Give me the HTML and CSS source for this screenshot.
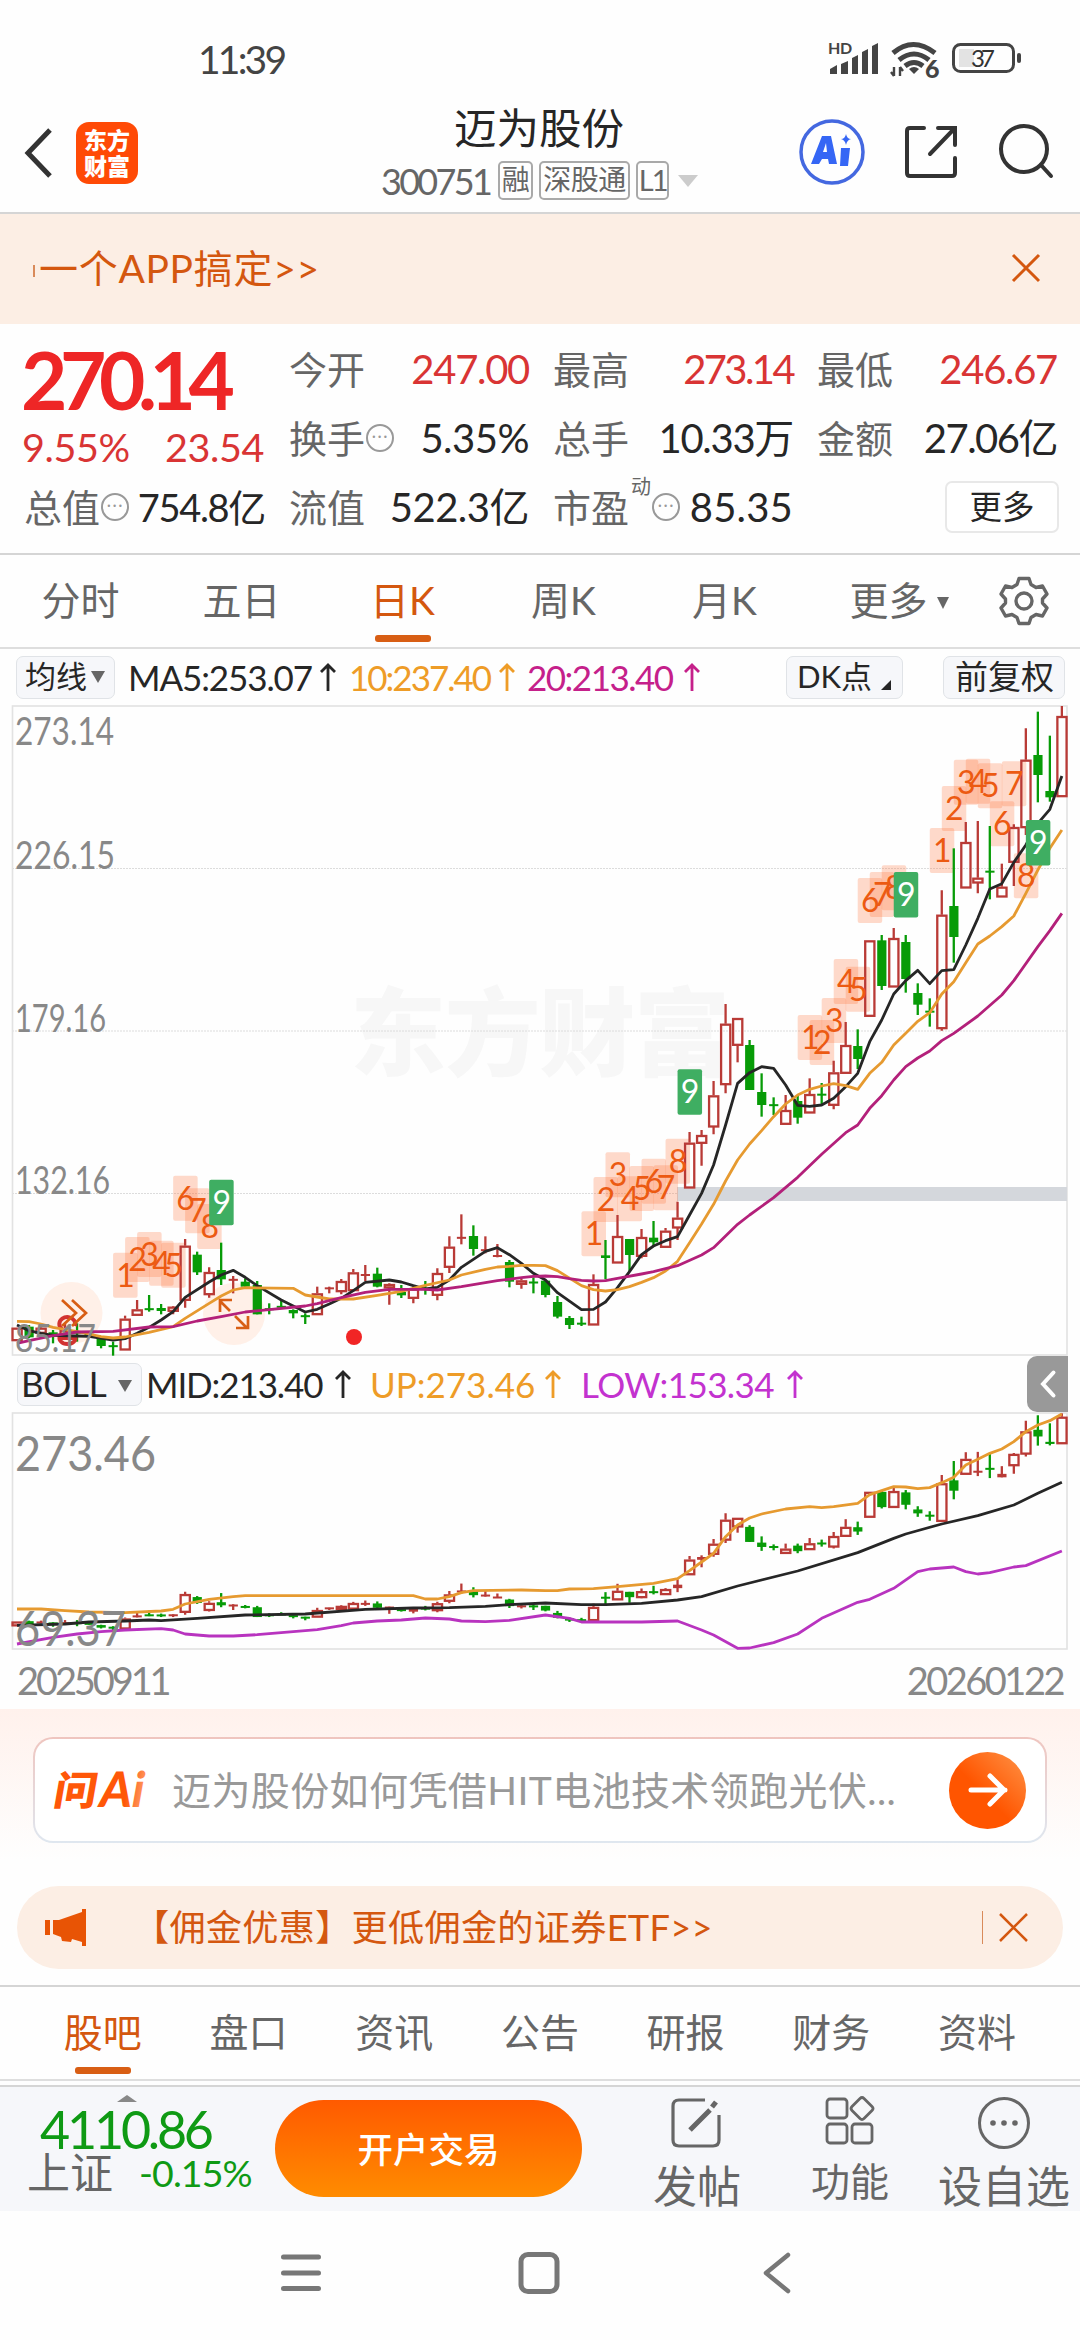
FILE: index.html
```html
<!DOCTYPE html>
<html lang="zh-CN">
<head>
<meta charset="utf-8">
<title>迈为股份 300751</title>
<link rel="stylesheet" href="styles.css">
</head>
<body>
<div class="screen">
  <div class="status">
    <span class="clock">11:39</span>
    <svg class="status-icons" width="200" height="44" viewBox="824 38 200 44">
      <g fill="#444">
        <text x="828" y="55" class="hd">HD</text>
        <path d="M830 70l7-4v9h-7zM841 65l7-3v13h-7zM852 59l6-3v19h-6zM862 53l6-3v25h-6zM872 47l6-3v31h-6z"/>
        <path d="M914 75l-5-5q5-4 10 0z"/>
        <path d="M894 68v9M891 73l3 4M900 77v-9M903 72l-3-4" fill="none" stroke="#444" stroke-width="2.4"/>
        <text x="925" y="79" class="six">6</text>
      </g>
      <g fill="none" stroke="#444" stroke-width="5">
        <path d="M893 54q20-17 42 0M899 61q15-12 30 0M905 67q9-7 18 0"/>
      </g>
      <rect x="953.500" y="45.500" width="60" height="27" rx="7" fill="none" stroke="#444" stroke-width="3"/>
      <path d="M959 50h15v18h-15q0 0 0-3z" fill="#e3e3e3"/>
      <rect x="1017" y="54" width="4" height="10" rx="2" fill="#444"/>
      <text x="971" y="67.500" class="batt" textLength="24">37</text>
    </svg>
  </div>

  <header class="header">
    <svg class="back" width="30" height="52" viewBox="0 0 30 52"><path d="M26 3L4 26l22 23" fill="none" stroke="#333" stroke-width="5"/></svg>
    <div class="brand"><span>东方</span><span>财富</span></div>
    <div class="title">
      <h1>迈为股份</h1>
      <div class="sub"><span class="code">300751</span><i class="tag">融</i><i class="tag tag-wide">深股通</i><i class="tag tag-l">L1</i><b class="drop"></b></div>
    </div>
    <svg class="tools" width="262" height="70" viewBox="796 116 262 70">
      <circle cx="831" cy="152" r="31" fill="none" stroke="#4468e0" stroke-width="3.500"/>
      <path fill="#3566f5" fill-rule="evenodd" d="M821 136h9l6 28h-8l-1-5h-6l-3 5h-8zM825 143l-3 9h4zM840 148h9l-2 18h-8zM845 134q1 5 5 5q-4 1-5 6q-1-5-5-6q4 0 5-5z"/>
      <g fill="none" stroke="#333" stroke-width="4" stroke-linecap="round">
        <path d="M923 128h-14q-3 0-3 3v42q0 3 3 3h42q3 0 3-3v-15M937 128h17v17M953 129l-24 25"/>
        <circle cx="1023" cy="149" r="23"/><path d="M1040 165l10 11"/>
      </g>
    </svg>
  </header>

  <div class="banner"><span class="stub"></span><span class="banner-text">一个APP搞定&gt;&gt;</span>
    <svg width="30" height="30" viewBox="0 0 30 30"><path d="M2 2l26 26M28 2L2 28" stroke="#d4570f" stroke-width="3"/></svg>
  </div>

  <section class="quote">
    <div class="price-box">
      <div class="price">270.14</div>
      <div class="change"><span>9.55%</span><span>23.54</span></div>
    </div>
    <div class="cell"><label>今开</label><span class="v up">247.00</span></div>
    <div class="cell"><label>最高</label><span class="v up snug">273.14</span></div>
    <div class="cell"><label>最低</label><span class="v up">246.67</span></div>
    <div class="cell"><label>换手</label><i class="dots">•••</i><span class="v wide">5.35%</span></div>
    <div class="cell"><label>总手</label><span class="v">10.33万</span></div>
    <div class="cell"><label>金额</label><span class="v tight">27.06亿</span></div>
    <div class="cell"><label>总值</label><i class="dots">•••</i><span class="v small">754.8亿</span></div>
    <div class="cell"><label>流值</label><span class="v wide">522.3亿</span></div>
    <div class="cell"><label>市盈</label><sup>动</sup><i class="dots">•••</i><span class="v wider">85.35</span></div>
    <div class="cell end"><button class="more">更多</button></div>
  </section>

  <nav class="periods">
    <span>分时</span><span>五日</span><span class="on">日K</span><span>周K</span><span>月K</span><span class="pm">更多<b></b></span>
    <svg width="50" height="50" viewBox="-25 -25 50 50" fill="none" stroke="#666" stroke-width="3.400" stroke-linejoin="round"><path d="M-5-22.500h10l2 6 5 3 6.500-1.500 4.500 8-4.500 5v4l4.500 5-4.500 8-6.500-1.500-5 3-2 6h-10l-2-6-5-3-6.500 1.500-4.500-8 4.500-5v-4l-4.500-5 4.500-8 6.500 1.500 5-3z"/><circle r="8"/></svg>
  </nav>

  <div class="ind">
    <span class="chip">均线<b></b></span>
    <span class="m1">MA5:253.07</span><svg class="arr a1" width="16" height="28" viewBox="0 0 16 28"><path d="M8 28V2M1 9l7-7 7 7"/></svg>
    <span class="m2">10:237.40</span><svg class="arr a2" width="16" height="28" viewBox="0 0 16 28"><path d="M8 28V2M1 9l7-7 7 7"/></svg>
    <span class="m3">20:213.40</span><svg class="arr a3" width="16" height="28" viewBox="0 0 16 28"><path d="M8 28V2M1 9l7-7 7 7"/></svg>
    <span class="chip dk">DK点<em></em></span><span class="chip fq">前复权</span>
  </div>
  <svg id="kline" class="chart" width="1080" height="651" viewBox="0 705 1080 651"></svg>

  <div class="ind boll">
    <span class="chip bl">BOLL<b></b></span>
    <span class="b1">MID:213.40</span><svg class="arr a1" width="16" height="30" viewBox="0 0 16 28"><path d="M8 28V2M1 9l7-7 7 7"/></svg>
    <span class="b2">UP:273.46</span><svg class="arr a2" width="16" height="30" viewBox="0 0 16 28"><path d="M8 28V2M1 9l7-7 7 7"/></svg>
    <span class="b3">LOW:153.34</span><svg class="arr a4" width="16" height="30" viewBox="0 0 16 28"><path d="M8 28V2M1 9l7-7 7 7"/></svg>
    <span class="handle"><svg width="16" height="28" viewBox="0 0 16 28"><path d="M13.500 2.500L3 14l10.500 11.500" fill="none" stroke="#fff" stroke-width="4" stroke-linecap="round"/></svg></span>
  </div>
  <svg id="boll" class="chart" width="1080" height="239" viewBox="0 1412 1080 239"></svg>
  <div class="dates"><span>20250911</span><span>20260122</span></div>

  <section class="ask">
    <div class="ask-card">
      <svg class="ask-logo" width="94" height="50" viewBox="0 0 94 50">
        <defs><linearGradient id="lg" x1="0" x2="1"><stop offset=".6" stop-color="#ff5708"/><stop offset="1" stop-color="#ff9a63"/></linearGradient></defs>
        <g transform="skewX(-10)" fill="#ff5708"><text x="7" y="40" class="wen" textLength="43" lengthAdjust="spacingAndGlyphs">问</text><text x="53" y="42" class="ai" fill="url(#lg)" textLength="44" lengthAdjust="spacingAndGlyphs">Ai</text></g>
      </svg>
      <span class="ask-text">迈为股份如何凭借HIT电池技术领跑光伏...</span>
      <span class="go"><svg width="40" height="36" viewBox="0 0 40 36"><path d="M3 18h34M22 4l14 14-14 14" fill="none" stroke="#fff" stroke-width="5" stroke-linecap="round" stroke-linejoin="round"/></svg></span>
    </div>
  </section>

  <div class="promo">
    <svg width="42" height="37" viewBox="0 0 42 37"><path d="M0 11h5v15H0zM8 11h6L37 3V0h4v37h-4v-4l-10-3-1 3-9-1-1-4-8-3z" fill="#e85405"/></svg>
    <span class="promo-text">【佣金优惠】更低佣金的证券ETF&gt;&gt;</span>
    <i class="bar"></i>
    <svg width="31" height="31" viewBox="0 0 31 31"><path d="M2 2l27 27M29 2L2 29" stroke="#d4570f" stroke-width="2.500"/></svg>
  </div>

  <nav class="tabs">
    <span class="on">股吧</span><span>盘口</span><span>资讯</span><span>公告</span><span>研报</span><span>财务</span><span>资料</span>
  </nav>

  <footer class="bottom">
    <div class="index">
      <b class="tri"></b>
      <div class="pts">4110.86</div>
      <div class="sh"><span>上证</span><em>-0.15%</em></div>
    </div>
    <button class="open">开户交易</button>
    <div class="act a-post">
      <svg width="54" height="54" viewBox="0 0 54 54" fill="none" stroke="#666" stroke-width="3.200"><path d="M35 4H9q-6 0-6 6v34q0 6 6 6h34q6 0 6-6V19"/><path d="M46 6l-4 5M40 14L20 34" stroke-width="5"/></svg>
      <span>发帖</span>
    </div>
    <div class="act a-fn">
      <svg width="50" height="50" viewBox="0 0 50 50" fill="none" stroke="#666" stroke-width="2.800"><rect x="2" y="3" width="20" height="19" rx="3"/><rect x="2" y="28" width="20" height="19" rx="3"/><rect x="27" y="28" width="20" height="19" rx="3"/><path d="M35 2.500q2-2 4 0l8 8q2 2 0 4l-8 8q-2 2-4 0l-8-8q-2-2 0-4z"/></svg>
      <span>功能</span>
    </div>
    <div class="act a-add">
      <svg width="54" height="54" viewBox="-27 -27 54 54"><circle r="24.500" fill="none" stroke="#666" stroke-width="3"/><g fill="#666"><circle cx="-11" r="2.800"/><circle r="2.800"/><circle cx="11" r="2.800"/></g></svg>
      <span>设自选</span>
    </div>
  </footer>

  <div class="sysnav">
    <svg width="42" height="44" viewBox="0 0 42 44"><path d="M3.500 6h35M3.500 22h35M3.500 37.500h35" stroke="#777" stroke-width="5" stroke-linecap="round"/></svg>
    <svg width="42" height="44" viewBox="0 0 42 44"><rect x="3" y="3.500" width="36" height="37" rx="7" fill="none" stroke="#777" stroke-width="5"/></svg>
    <svg width="42" height="44" viewBox="0 0 42 44"><path d="M32 4L10 22l22 18" fill="none" stroke="#777" stroke-width="4.500" stroke-linecap="round" stroke-linejoin="round"/></svg>
  </div>
</div>
<script src="chart.js"></script>
</body>
</html>
```

FILE: styles.css
```css
* { box-sizing: border-box; }
body {
  margin: 0;
  background: #fff;
  color: #262626;
  font-family: Lato, "Noto Sans CJK SC", sans-serif;
  font-size: 38px;
}
.screen { width: 1080px; height: 2340px; overflow: hidden; display: flex; flex-direction: column; background: #fefefe; }
.screen > * { flex: none; }
i, em { font-style: normal; }
button { font: inherit; padding: 0; }
svg { overflow: visible; }

.status { height: 104px; padding: 14px 56px 0 198px; display: flex; justify-content: space-between; align-items: center; }
.clock { font-size: 39px; color: #444; letter-spacing: -2.8px; margin-top: -1px; }
.hd { font: bold 16px Lato, sans-serif; letter-spacing: -.4px; }
.six { font: 900 25px Lato, sans-serif; }
.batt { font: 24px Lato, sans-serif; fill: #333; }

.header { height: 110px; border-bottom: 2px solid #d5d5d5; display: flex; align-items: center; padding: 0 21px 14px 24px; }
.back { margin-top: 3px; }
.brand { width: 62px; height: 62px; margin: 4px 0 0 22px; border-radius: 13px; background: #ff4a06; color: #fff; font-weight: 900; font-size: 23px; line-height: 26px; display: flex; flex-direction: column; align-items: center; justify-content: center; }
.title { width: 446px; margin-left: 179px; }
.title h1 { margin: 2px 0 0; text-align: center; font-size: 42.500px; line-height: 50px; font-weight: 400; padding-right: 2px; }
.sub { display: flex; align-items: center; height: 42px; margin-top: 7px; margin-left: 64px; }
.code { font-size: 36px; color: #666; letter-spacing: -2.7px; margin-right: 8px; }
.tag { height: 39px; width: 35px; border: 2px solid #a9a9a9; border-radius: 5px; color: #666; font-size: 28px; line-height: 33px; text-align: center; margin-right: 6px; letter-spacing: -.5px; flex: none; }
.tag-wide { width: 91px; }
.tag-l { width: 33px; margin-right: 9px; font-size: 29px; letter-spacing: -2px; }
.drop { border: 10px solid transparent; border-top: 12px solid #ccc; border-bottom: 0; }
.tools { margin-left: 34px; margin-top: 0; }

.banner { height: 110px; background: #fceee4; display: flex; align-items: center; padding: 0 39px 2px 33px; color: #d4570f; }
.stub { width: 2px; height: 12px; background: #d98a5a; margin: 6px 4px 0 0; }
.banner-text { flex: 1; font-size: 39px; letter-spacing: .7px; margin-top: -4px; }

.quote { height: 229px; padding: 10px 24px 0; display: grid; grid-template-columns: 240px 239px 239px 239px; column-gap: 25px; grid-template-rows: 69px 69px 69px; }
.price-box { grid-row: span 2; color: #ee2626; display: flex; flex-direction: column; }
.price { font-size: 80px; font-weight: 700; line-height: 90px; letter-spacing: -7.4px; margin-left: -3px; }
.change { display: flex; justify-content: space-between; font-size: 39.500px; line-height: 46px; letter-spacing: -.4px; margin-left: -2px; color: #d93434; }
.cell { display: flex; align-items: center; white-space: nowrap; line-height: 60px; }
.cell label { color: #666; font-size: 38px; }
.cell .v { margin-left: auto; font-size: 40px; letter-spacing: -1.3px; margin-right: -1px; }
.cell .tight { letter-spacing: -1.500px; }
.cell .snug { letter-spacing: -2.600px; }
.cell .wide { letter-spacing: -.5px; }
.cell .wider { letter-spacing: .2px; }
.cell .small { font-size: 38px; letter-spacing: -1.3px; }
.cell .up { color: #d93434; }
.dots { width: 28px; height: 28px; border: 2.500px solid #999; border-radius: 50%; font: 8px/23px "DejaVu Sans", sans-serif; color: #999; text-align: center; letter-spacing: 1px; margin-left: 1px; flex: none; }
.cell sup { font-size: 20px; line-height: 20px; color: #666; align-self: flex-start; margin: 4px 0 0 2px; }
.end { justify-content: flex-end; }
.more { width: 114px; height: 52px; border: 2px solid #e8e8e8; border-radius: 7px; background: #fff; color: #262626; font-size: 32.500px; line-height: 46px; margin-right: -3px; }

.periods { height: 96px; border-top: 2px solid #d5d5d5; border-bottom: 2px solid #dedede; display: flex; align-items: center; padding: 0 31px 0 0; color: #666; font-size: 39px; }
.periods span { width: 161px; text-align: center; line-height: 91px; height: 92px; position: relative; }
.periods .on, .tabs .on { color: #d4570f; }
.periods .on::after, .tabs .on::after { content: ""; position: absolute; left: 50%; bottom: 5px; width: 56px; margin-left: -28px; height: 7px; border-radius: 3px; background: #d85e14; }
.periods .pm { width: 178px; padding-left: 10px; }
.pm b { display: inline-block; border: 6.500px solid transparent; border-top: 12px solid #666; border-bottom: 0; margin-left: 9px; vertical-align: 6px; }
.periods svg { margin-left: 16px; }

.ind { height: 56px; display: flex; align-items: center; font-size: 35px; white-space: nowrap; padding-left: 16px; position: relative; }
.chip { height: 43px; border: 1.500px solid #e0e3e7; border-radius: 7px; background: #f6f7fa; font-size: 31px; line-height: 39px; width: 99px; padding-left: 8px; flex: none; }
.chip b { display: inline-block; border: 7px solid transparent; border-top: 12px solid #666; border-bottom: 0; margin-left: 4px; vertical-align: 5px; }
.m1 { margin-left: 13px; width: 192px; letter-spacing: -1.1px; }
.m2 { width: 150px; margin-left: 13px; color: #ee9c27; letter-spacing: -2px; }
.m3 { width: 157px; margin-left: 12px; color: #c5208a; letter-spacing: -1.500px; }
.arr { fill: none; stroke-width: 2.800; flex: none; }
.a1 { stroke: #262626; } .a2 { stroke: #ee9c27; } .a3 { stroke: #c5208a; } .a4 { stroke: #c332cf; }
.dk { width: 117px; margin-left: 86px; padding-left: 10px; }
.dk em { display: inline-block; border-left: 10px solid transparent; border-bottom: 10px solid #262626; margin-left: 9px; vertical-align: -2px; }
.fq { width: 122px; margin-left: 40px; padding-left: 11px; font-size: 33px; }
.chart { display: block; }
.boll { height: 56px; padding-left: 17px; }
.bl { width: 125px; padding-left: 3px; font-size: 35px; letter-spacing: -.3px; }
.bl b { margin-left: 12px; }
.b1 { width: 189px; margin-left: 4px; letter-spacing: -1.1px; }
.b2 { width: 175px; margin-left: 19px; color: #ee9c27; }
.b3 { width: 206px; margin-left: 20px; color: #c332cf; letter-spacing: -.6px; }
.handle { width: 41px; height: 56px; background: #999; border-radius: 10px 0 0 10px; margin-left: auto; margin-right: 12px; display: flex; align-items: center; justify-content: center; }
.axis { font: 38px Lato, sans-serif; fill: #888; }
.axis-lg { font: 49px Lato, sans-serif; fill: #888; }
.mark { font: 32px Lato, sans-serif; text-anchor: middle; }
.watermark { font: 900 96px "Noto Sans CJK SC", sans-serif; fill: #f7f7f7; }
.dates { height: 58px; display: flex; justify-content: space-between; align-items: center; padding: 0 17px 0; color: #888; font-size: 38px; letter-spacing: -3.1px; }
.dates span:last-child { letter-spacing: -2.500px; }

.ask { height: 177px; padding: 28px 33px 0; background: linear-gradient(#fff1ec, #fefefe 85%); }
.ask-card { height: 106px; border: 2px solid transparent; border-radius: 20px; background: linear-gradient(#fff, #fff) padding-box, linear-gradient(#efc5bf, #dfe7f0) border-box; display: flex; align-items: center; padding: 0 19px 0 17px; }
.ask-text { margin: -5px 0 0 26px; flex: 1; color: #999; font-size: 39px; white-space: nowrap; letter-spacing: .4px; }
.wen { font: 900 40px "Noto Sans CJK SC", sans-serif; }
.ai { font: 900 49px Lato, sans-serif; }
.go { width: 77px; height: 77px; border-radius: 50%; background: linear-gradient(45deg, #ff5500 45%, #ff9448); display: flex; align-items: center; justify-content: center; flex: none; }

.promo { height: 83px; margin: 0 17px; border-radius: 42px; background: #fceee4; display: flex; align-items: center; padding: 0 34px 0 28px; color: #d4570f; }
.promo-text { flex: 1; margin: -5px 0 0 46px; font-size: 36.200px; letter-spacing: .25px; white-space: nowrap; }
.bar { width: 1.500px; height: 33px; background: #d98a5a; margin-right: 15px; }

.tabs { height: 96px; margin-top: 16px; border-top: 2px solid #d5d5d5; border-bottom: 2px solid #dedede; display: flex; padding: 0 30px; font-size: 39px; color: #666; }
.tabs span { width: 145.700px; flex: none; text-align: center; position: relative; line-height: 90px; height: 92px; }
.bottom { height: 126px; margin-top: 4px; border-top: 2px solid #d5d5d5; background: #f6f7fa; display: flex; position: relative; }
.index { width: 275px; padding: 8px 0 0 27px; color: #0f9a14; }
.tri { display: block; width: 0; border: 10px solid transparent; border-bottom: 7px solid #888; border-top: 0; margin-left: 90px; }
.pts { font-size: 52px; line-height: 56px; letter-spacing: -3.2px; margin: -1px 0 0 13px; }
.sh { display: flex; line-height: 40px; height: 40px; align-items: center; margin-top: -4px; }
.sh span { font-size: 43px; color: #666; }
.sh em { font-size: 37.500px; letter-spacing: -.9px; margin-left: 26px; }
.open { width: 307px; height: 97px; margin-top: 13px; border: 0; border-radius: 49px; background: linear-gradient(#ff5a00, #ff8c00); color: #fff; font-size: 35.500px; font-weight: 500; flex: none; padding-bottom: 3px; }
.act { display: flex; flex-direction: column; align-items: center; color: #666; font-size: 44px; line-height: 60px; white-space: nowrap; flex: none; padding-top: 9px; }
.act span { margin-top: 6px; }
.a-post { width: 112px; margin-left: 59px; }
.a-fn { width: 112px; margin-left: 41px; font-size: 39px; }
.a-add { width: 140px; margin-left: 28px; }
.a-fn span { margin-top: 5px; }
.sysnav { height: 129px; display: flex; align-items: center; gap: 196px; padding: 0 0 5px 280px; }
```

FILE: chart.js
```js
// Offsets are thirds of a pixel from the reference row at y = 1100.
const NS = "http://www.w3.org/2000/svg";
const X = i => 17 + i * 12.010;
const Y = v => 1100 + v / 3;
const price = v => 273.14 - (Y(v) - 706) / 3.4527;
const YB = v => 1413 + (273.46 - price(v)) * 1.156;
const Y2 = v => 1400 + v / 3;
const RED = "#b93a36", GREEN = "#079b07";

function add(svg, tag, attrs, text) {
  const el = document.createElementNS(NS, tag);
  for (const k in attrs) el.setAttribute(k, attrs[k]);
  if (text) el.textContent = text;
  svg.appendChild(el);
  return el;
}

// colour, high, body top, body bottom, low
const candles = `r 683 683 722 722|g 675 680 712 714|r 675 683 700 700|g 690 697 703 730|r 670 690 706 706|g 670 696 700 725|g 695 702 706 712|g 712 715 738 745|g 725 736 741 767|r 647 656 750 750|r 600 628 646 646|g 585 626 629 635|g 612 624 633 643|r 618 620 634 643|r 417 437 601 623|g 455 464 517 525|r 502 516 584 593|g 428 510 538 555|r 528 538 541 580|g 535 545 560 565|g 543 555 643 643|g 610 626 629 643|g 600 619 622 625|g 628 630 640 655|g 640 646 651 672|r 560 580 644 644|r 560 562 568 580|r 537 543 575 583|r 507 517 572 572|r 495 523 527 543|g 503 521 560 562|r 550 552 564 614|g 555 576 586 594|r 560 566 595 610|g 543 566 569 584|r 505 519 586 601|r 409 440 502 519|r 343 412 415 433|g 376 408 447 467|r 409 449 452 460|r 432 465 471 472|g 480 486 545 562|r 537 541 553 566|g 532 546 549 580|g 542 542 585 592|g 588 606 650 655|g 648 654 675 687|g 650 668 674 678|r 523 552 675 675|g 420 466 474 538|r 345 408 489 489|g 417 417 465 515|r 387 411 469 475|g 363 413 427 440|r 384 392 442 442|r 305 353 384 420|r 96 128 264 264|r 90 105 130 197|r -57 -14 81 103|r -288 -229 -46 -20|r -246 -246 -164 -113|g -180 -165 -30 -30|g -80 -24 15 50|g -8 14 17 45|r -15 30 73 73|g -15 3 53 71|r -65 -18 39 39|g -51 -18 -14 12|r -118 -83 16 28|r -234 -165 -80 -80|g -212 -162 -123 -93|r -479 -479 -251 -251|g -495 -479 -342 -330|r -516 -486 -339 -339|g -495 -474 -363 -322|g -350 -321 -286 -255|g -305 -267 -263 -220|r -629 -556 -214 -208|g -755 -582 -489 -412|r -834 -774 -636 -636|r -837 -667 -651 -620|g -822 -687 -683 -602|r -709 -640 -609 -609|r -827 -819 -713 -642|r -1115 -1021 -817 -795|g -1165 -1035 -975 -893|g -1093 -927 -908 -895|r -1182 -1152 -910 -910`.split("|").map(s => s.split(" "));

const ma5 = "0:675 1:692 2:700 3:706 5:708 6:709 8:720 9:716 10:700 11:682 12:660 13:635 14:592 16:546 17:525 18:511 19:532 20:557 22:600 24:636 25:628 26:612 27:595 28:572 29:547 31:540 32:546 33:557 34:567 35:562 36:540 37:502 39:454 40:443 41:464 42:490 43:520 44:540 45:578 47:629 48:628 49:606 50:563 51:515 52:464 53:438 54:422 55:410 56:345 57:280 58:195 59:75 60:-50 61:-82 62:-100 63:-95 64:-45 65:16 66:19 67:15 68:-5 69:-40 70:-80 71:-175 72:-240 73:-318 74:-358 75:-389 76:-349 77:-388 78:-391 79:-465 80:-545 81:-633 82:-649 83:-713 84:-765 85:-830 86:-872 87:-972";
const ma10 = "0:664 1:665 2:672 3:682 5:695 6:702 7:710 8:714 9:711 11:697 13:680 14:655 16:610 17:588 18:570 19:563 23:565 24:585 26:597 28:597 30:586 32:574 34:556 36:540 37:525 39:508 40:501 41:499 42:496 43:496 44:497 45:512 47:557 48:569 49:573 50:569 51:560 52:547 53:533 54:513 55:484 56:428 57:372 58:313 59:243 60:180 61:132 62:92 63:50 64:12 65:-15 66:-32 67:-42 68:-49 69:-43 70:-32 71:-80 72:-113 73:-165 74:-200 75:-236 76:-262 77:-318 78:-355 79:-412 80:-468 81:-492 82:-520 83:-552 84:-620 85:-690 86:-755 87:-810";
const ma20 = "0:730 1:722 3:707 5:696 8:694 11:681 13:680 15:663 17:650 19:636 21:629 24:618 25:611 27:593 29:577 31:568 34:568 35:570 37:560 39:548 40:542 42:533 43:529 44:528 45:530 46:536 47:541 48:543 49:542 50:535 52:522 53:515 55:497 57:465 58:443 60:373 61:345 63:293 65:232 67:163 69:98 70:75 71:25 72:-13 73:-60 74:-100 75:-126 76:-147 77:-178 78:-200 80:-252 82:-315 83:-358 85:-460 86:-508 87:-560";
const up = "0:627 2:627 4:632 6:636 9:638 12:633 13:628 14:612 16:598 18:590 19:587 33:587 34:597 35:597 36:590 37:578 38:572 42:570 44:572 45:572 46:567 48:566 50:560 53:550 55:536 56:512 57:486 58:460 59:410 60:375 61:354 62:342 64:327 66:320 67:323 68:320 70:310 71:284 73:260 74:261 75:266 76:263 77:248 78:232 79:195 80:178 81:160 82:147 83:125 84:95 85:75 86:62 87:42";
const mid = "0:676 4:672 6:666 9:663 11:660 12:662 15:655 19:645 24:642 29:628 33:624 36:623 39:619 41:614 44:609 47:614 49:614 52:610 55:600 57:590 60:558 65:513 70:458 73:415 74:402 77:372 80:347 83:315 85:280 87:247";
const low = "0:732 3:712 5:702 7:695 9:690 12:686 13:690 14:702 16:708 18:708 20:704 25:689 27:677 28:669 30:663 32:660 34:654 36:657 37:663 39:665 41:661 44:645 46:655 47:666 52:666 55:663 57:690 58:705 60:745 61:744 63:728 65:702 67:655 70:607 71:598 73:565 75:515 76:507 78:501 79:515 80:522 81:518 83:501 84:497 87:453";

// index : count : top of the badge
const marks = "9:1:458 10:2:411 11:3:396 12:4:422 13:5:428 14:6:227 15:7:265 16:8:312 17:9:239 48:1:334 49:2:231 50:3:157 51:4:229 52:5:198 53:6:176 54:7:196 55:8:116 56:9:-92 66:1:-255 67:2:-240 68:3:-306 69:4:-423 70:5:-400 71:6:-666 72:7:-684 73:8:-704 74:9:-684 77:1:-816 78:2:-942 79:3:-1021 80:4:-1024 81:5:-1010 82:6:-896 83:7:-1016 84:8:-740 85:9:-840".split(" ").map(s => s.split(":").map(Number));

function frame(svg, top, bottom) {
  add(svg, "rect", { x: 12.500, y: top, width: 1054.500, height: bottom - top, fill: "none", stroke: "#e2e2e2", "stroke-width": 1.600 });
}

function drawCandles(svg, y) {
  candles.forEach(([c, ...v], i) => {
    const [h, t, b, l] = v.map(Number).map(y);
    const x = X(i), col = c === "r" ? RED : GREEN;
    const mid = (t + b) / 2, hollow = c === "r" && b - t > 3.500;
    if (hollow) {
      add(svg, "path", { d: `M${x} ${h}V${t}M${x} ${b}V${l}`, stroke: col, "stroke-width": 2.300 });
      add(svg, "rect", { x: x - 4.500, y: t + 1, width: 9.200, height: b - t - 1.500, fill: "none", stroke: col, "stroke-width": 2.300 });
    } else {
      const hh = Math.max(b - t, 2);
      add(svg, "path", { d: `M${x} ${h}V${l}`, stroke: col, "stroke-width": 2.300 });
      add(svg, "rect", { x: x - 4.500, y: mid - hh / 2, width: 9.200, height: hh, fill: col });
    }
  });
}

function line(svg, data, y, stroke) {
  const points = data.split(" ").map(p => p.split(":").map(Number)).map(([i, v]) => `${X(i)},${y(v)}`).join(" ");
  add(svg, "polyline", { points, fill: "none", stroke, "stroke-width": 2.800, "stroke-linejoin": "round" });
}

function label(svg, x, y, w, text, cls) {
  add(svg, "text", { x, y, class: cls || "axis", textLength: w, lengthAdjust: "spacingAndGlyphs" }, text);
}

const k = document.getElementById("kline");
add(k, "text", { x: 350, y: 1068, class: "watermark", textLength: 380 }, "东方财富");
[868.500, 1031, 1193.500].forEach(y => add(k, "path", { d: `M12 ${y}H1067`, stroke: "#dcdcdc", "stroke-width": 1, "stroke-dasharray": "2 1" }));
frame(k, 706, 1355);
add(k, "rect", { x: 677, y: 1187, width: 390, height: 14, fill: "#d4d7dc" });
marks.filter(m => m[1] < 9).forEach(([i, , t]) => add(k, "rect", { x: X(i) - 12, y: Y(t), width: 24.500, height: 45, rx: 2, fill: "#ff7038", "fill-opacity": .26 }));
add(k, "circle", { cx: 71.500, cy: 1313, r: 31, fill: "#fff0e8" });
add(k, "circle", { cx: 234, cy: 1314, r: 31, fill: "#fff0e8" });
drawCandles(k, Y);
add(k, "path", { d: "M75 1326a8 7 0 1 0-7 5M60 1336a8 6 0 1 0 15 0M58 1338h19", fill: "none", stroke: "#d23230", "stroke-width": 4 });
line(k, ma5, Y, "#262626");
line(k, ma10, Y, "#e69a30");
line(k, ma20, Y, "#b3207a");
marks.forEach(([i, n, t]) => {
  if (n === 9) add(k, "rect", { x: X(i) - 12, y: Y(t), width: 24.500, height: 45.500, rx: 2, fill: "#3fae62" });
  add(k, "text", { x: X(i) + .5, y: Y(t) + 34, class: "mark", fill: n === 9 ? "#fff" : "#ec5a12" }, String(n));
});
add(k, "path", { d: "M62 1300l14 13-14 13M72 1300l14 13-14 13M230 1311l-10-10M220 1312v-12h12M235 1316l12 12M248 1316v12h-12", fill: "none", stroke: "#d85e14", "stroke-width": 2.700 });
add(k, "circle", { cx: 354, cy: 1337, r: 8, fill: "#f12525" });
label(k, 15, 745, 99, "273.14");
label(k, 15, 869, 100, "226.15");
label(k, 15, 1031.500, 91, "179.16");
label(k, 15, 1194, 95, "132.16");
label(k, 15, 1352, 81, "85.17");

const b = document.getElementById("boll");
frame(b, 1413, 1649);
drawCandles(b, YB);
line(b, up, Y2, "#e69a30");
line(b, mid, Y2, "#262626");
line(b, low, Y2, "#b833bf");
label(b, 15, 1471, 141, "273.46", "axis-lg");
label(b, 15, 1645.500, 111, "69.37", "axis-lg");
```
